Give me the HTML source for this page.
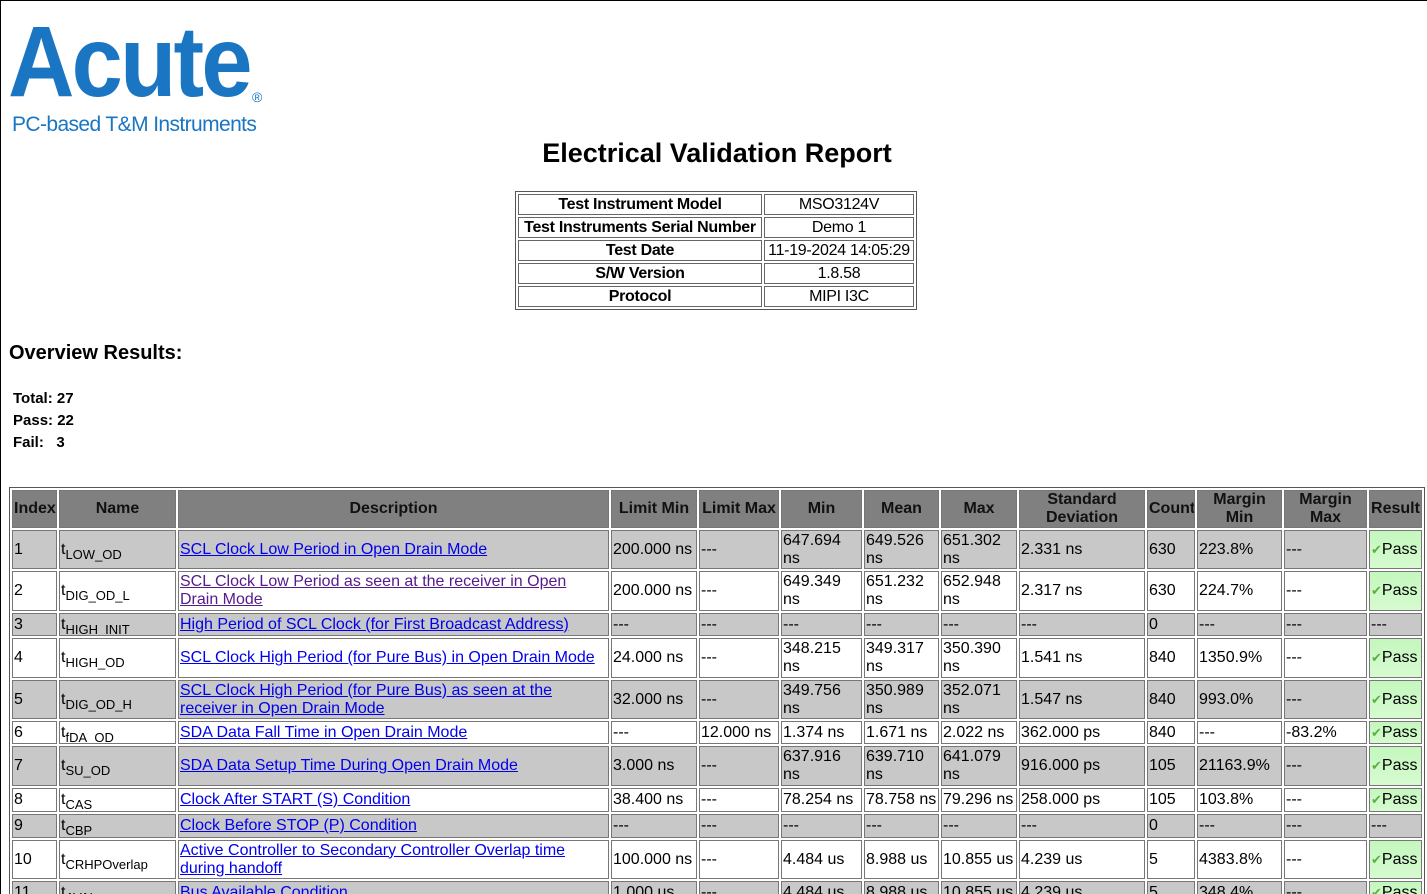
<!DOCTYPE html>
<html><head><meta charset="utf-8"><style>
html,body{margin:0;padding:0;width:1427px;height:894px;overflow:hidden;background:#fff}
body{font-family:"Liberation Sans",Arial,sans-serif;color:#000;position:relative;border-left:1px solid #000;border-top:1px solid #000;box-sizing:border-box}
.logo{position:absolute;left:7px;top:12px;color:#1a75c2}
.logo .big{font-size:100px;font-weight:bold;letter-spacing:-3px;line-height:98px;transform:scaleX(0.92);transform-origin:left}
.logo .reg{position:absolute;left:244px;top:76px;font-size:14px}
.logo .sub{position:absolute;left:4px;top:100px;font-size:21px;white-space:nowrap;letter-spacing:-0.6px}
h1{position:absolute;left:0;width:1432px;text-align:center;top:137px;margin:0;font-size:27px;font-weight:bold}
.info{position:absolute;left:514px;top:190px;border:1px solid #555;border-spacing:2px;font-size:16px;table-layout:fixed;width:398px}
.info td{border:1px solid #666;height:19px;padding:0;text-align:center;line-height:18px;white-space:nowrap;overflow:hidden;letter-spacing:-0.3px}
.info td.h{font-weight:bold;width:242px}
.info td.v{width:148px}
h2{position:absolute;left:8px;top:341px;margin:0;font-size:20px}
.ov{position:absolute;left:12px;top:387px;font-weight:bold;font-size:15px;line-height:22px}
.main{position:absolute;left:8px;top:486px;border:1px solid #555;border-spacing:2px;table-layout:fixed;width:1413px;font-size:16px}
.main td,.main th{border:1px solid #777;padding:0 1px;line-height:18px;vertical-align:middle;overflow:hidden;text-align:left;white-space:normal}
.main th{background:#808080;text-align:center;font-weight:bold;color:#111}
tr.g td{background:#c8c8c8}
tr.w td{background:#fff}
.main a{color:#0000ee;text-decoration:underline}
.main a.v{color:#551a8b}
sub{font-size:13px;vertical-align:-5px;line-height:0}
td.p{background:linear-gradient(#c4f7bd,#d6fbd0)!important}
.ck{color:#5bb040;font-size:13px}
</style></head><body>
<div class="logo"><div class="big">Acute</div><div class="reg">®</div><div class="sub">PC-based T&amp;M Instruments</div></div>
<h1>Electrical Validation Report</h1>
<table class="info">
<tr><td class="h">Test Instrument Model</td><td class="v">MSO3124V</td></tr>
<tr><td class="h">Test Instruments Serial Number</td><td class="v">Demo 1</td></tr>
<tr><td class="h">Test Date</td><td class="v">11-19-2024 14:05:29</td></tr>
<tr><td class="h">S/W Version</td><td class="v">1.8.58</td></tr>
<tr><td class="h">Protocol</td><td class="v">MIPI I3C</td></tr>
</table>
<h2>Overview Results:</h2>
<div class="ov">Total: 27<br>Pass: 22<br>Fail:&nbsp;&nbsp; 3</div>
<table class="main">
<colgroup><col style="width:45px"><col style="width:117px"><col style="width:431px"><col style="width:86px"><col style="width:80px"><col style="width:81px"><col style="width:75px"><col style="width:76px"><col style="width:126px"><col style="width:48px"><col style="width:85px"><col style="width:83px"><col style="width:53px"></colgroup>
<tr style="height:38px"><th>Index</th><th>Name</th><th>Description</th><th>Limit Min</th><th>Limit Max</th><th>Min</th><th>Mean</th><th>Max</th><th>Standard Deviation</th><th>Count</th><th>Margin Min</th><th>Margin Max</th><th>Result</th></tr>
<tr class="g" style="height:39px"><td>1</td><td>t<sub>LOW_OD</sub></td><td><a>SCL Clock Low Period in Open Drain Mode</a></td><td>200.000 ns</td><td>---</td><td>647.694 ns</td><td>649.526 ns</td><td>651.302 ns</td><td>2.331 ns</td><td>630</td><td>223.8%</td><td>---</td><td class="p"><span class="ck">✔</span>Pass</td></tr>
<tr class="w" style="height:40px"><td>2</td><td>t<sub>DIG_OD_L</sub></td><td><a class="v">SCL Clock Low Period as seen at the receiver in Open Drain Mode</a></td><td>200.000 ns</td><td>---</td><td>649.349 ns</td><td>651.232 ns</td><td>652.948 ns</td><td>2.317 ns</td><td>630</td><td>224.7%</td><td>---</td><td class="p"><span class="ck">✔</span>Pass</td></tr>
<tr class="g" style="height:23px"><td>3</td><td>t<sub>HIGH_INIT</sub></td><td><a>High Period of SCL Clock (for First Broadcast Address)</a></td><td>---</td><td>---</td><td>---</td><td>---</td><td>---</td><td>---</td><td>0</td><td>---</td><td>---</td><td>---</td></tr>
<tr class="w" style="height:40px"><td>4</td><td>t<sub>HIGH_OD</sub></td><td><a>SCL Clock High Period (for Pure Bus) in Open Drain Mode</a></td><td>24.000 ns</td><td>---</td><td>348.215 ns</td><td>349.317 ns</td><td>350.390 ns</td><td>1.541 ns</td><td>840</td><td>1350.9%</td><td>---</td><td class="p"><span class="ck">✔</span>Pass</td></tr>
<tr class="g" style="height:39px"><td>5</td><td>t<sub>DIG_OD_H</sub></td><td><a>SCL Clock High Period (for Pure Bus) as seen at the receiver in Open Drain Mode</a></td><td>32.000 ns</td><td>---</td><td>349.756 ns</td><td>350.989 ns</td><td>352.071 ns</td><td>1.547 ns</td><td>840</td><td>993.0%</td><td>---</td><td class="p"><span class="ck">✔</span>Pass</td></tr>
<tr class="w" style="height:23px"><td>6</td><td>t<sub>fDA_OD</sub></td><td><a>SDA Data Fall Time in Open Drain Mode</a></td><td>---</td><td>12.000 ns</td><td>1.374 ns</td><td>1.671 ns</td><td>2.022 ns</td><td>362.000 ps</td><td>840</td><td>---</td><td>-83.2%</td><td class="p"><span class="ck">✔</span>Pass</td></tr>
<tr class="g" style="height:40px"><td>7</td><td>t<sub>SU_OD</sub></td><td><a>SDA Data Setup Time During Open Drain Mode</a></td><td>3.000 ns</td><td>---</td><td>637.916 ns</td><td>639.710 ns</td><td>641.079 ns</td><td>916.000 ps</td><td>105</td><td>21163.9%</td><td>---</td><td class="p"><span class="ck">✔</span>Pass</td></tr>
<tr class="w" style="height:24px"><td>8</td><td>t<sub>CAS</sub></td><td><a>Clock After START (S) Condition</a></td><td>38.400 ns</td><td>---</td><td>78.254 ns</td><td>78.758 ns</td><td>79.296 ns</td><td>258.000 ps</td><td>105</td><td>103.8%</td><td>---</td><td class="p"><span class="ck">✔</span>Pass</td></tr>
<tr class="g" style="height:24px"><td>9</td><td>t<sub>CBP</sub></td><td><a>Clock Before STOP (P) Condition</a></td><td>---</td><td>---</td><td>---</td><td>---</td><td>---</td><td>---</td><td>0</td><td>---</td><td>---</td><td>---</td></tr>
<tr class="w" style="height:39px"><td>10</td><td>t<sub>CRHPOverlap</sub></td><td><a>Active Controller to Secondary Controller Overlap time during handoff</a></td><td>100.000 ns</td><td>---</td><td>4.484 us</td><td>8.988 us</td><td>10.855 us</td><td>4.239 us</td><td>5</td><td>4383.8%</td><td>---</td><td class="p"><span class="ck">✔</span>Pass</td></tr>
<tr class="g" style="height:24px"><td>11</td><td>t<sub>AVAL</sub></td><td><a>Bus Available Condition</a></td><td>1.000 us</td><td>---</td><td>4.484 us</td><td>8.988 us</td><td>10.855 us</td><td>4.239 us</td><td>5</td><td>348.4%</td><td>---</td><td class="p"><span class="ck">✔</span>Pass</td></tr>
</table>
</body></html>
